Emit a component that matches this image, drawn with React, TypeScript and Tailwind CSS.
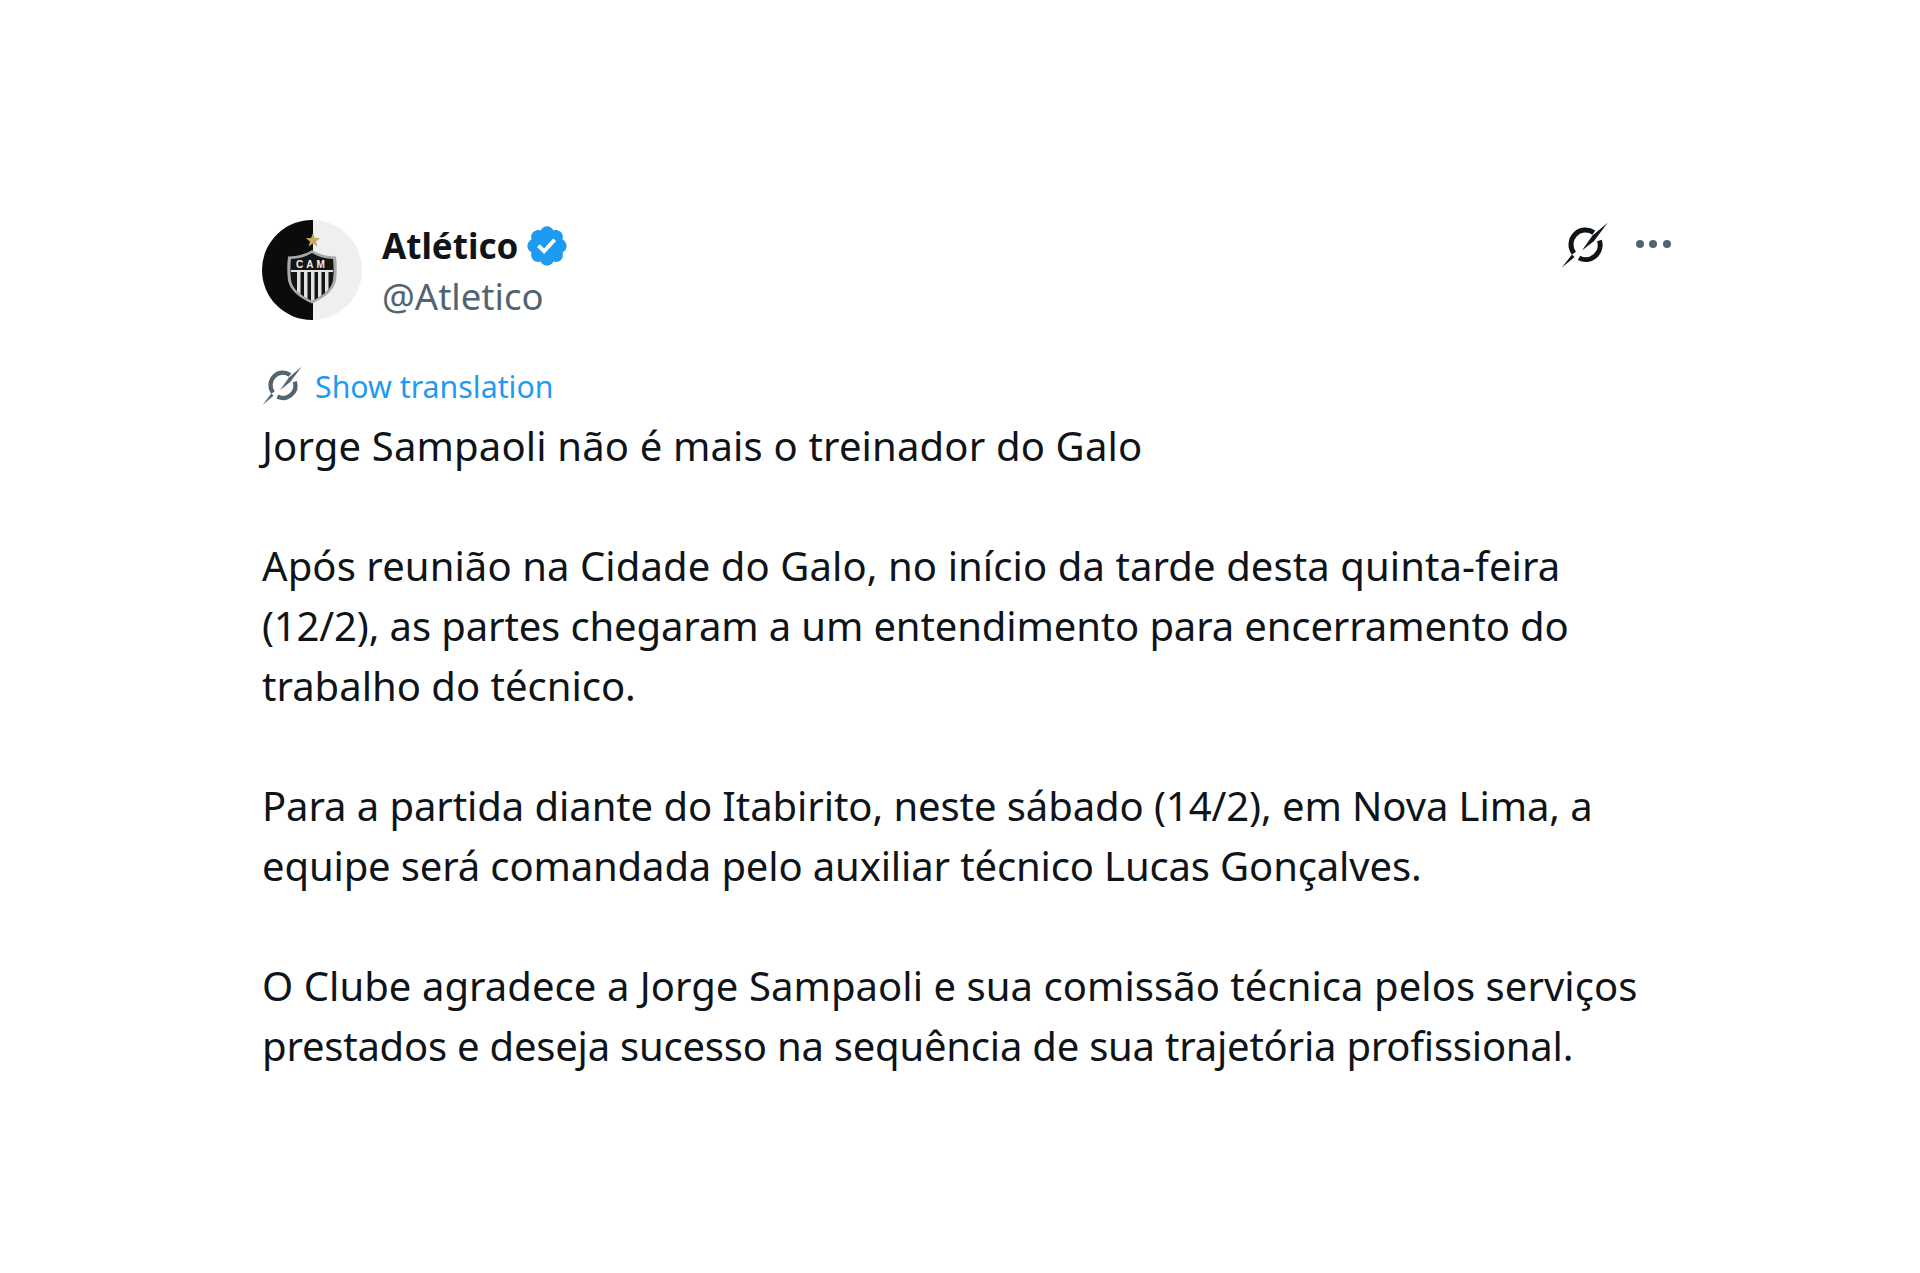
const Glyph = ({ className }: { className: string }) => (
  <svg viewBox="0 0 48 48" className={className}>
    <path d="M32.800 11.600A14.500 14.500 0 0 0 12.900 32.200" fill="none" stroke="currentColor" strokeWidth="5" />
    <path d="M18 36.900A14.500 14.500 0 0 0 38.400 19.500" fill="none" stroke="currentColor" strokeWidth="5" />
    <path d="M46.700 1.700 33 20 21 29.500 31.500 14.500z" fill="currentColor" />
    <path d="M.7 46.700 11 33.500l2.500 2.500z" fill="currentColor" />
  </svg>
);

const Crest = () => (
  <svg viewBox="0 0 100 100" className="w-[100px] h-[100px] rounded-full">
    <defs>
      <clipPath id="shield">
        <path d="M50 33c6 3.500 12 5.500 21 6 .8 7 .8 14 0 21-1.500 9-9 15-21 21-12-6-19.500-12-21-21-.8-7-.8-14 0-21 9-.5 15-2.500 21-6z" />
      </clipPath>
    </defs>
    <rect width="51" height="100" fill="#0b0b0b" />
    <rect x="51" width="49" height="100" fill="#efefef" />
    <path d="M51 13l1.900 5 5.300.2-4.200 3.300 1.500 5.100-4.500-3-4.500 3 1.500-5.100-4.200-3.300 5.300-.2z" fill="#c4aa5e" />
    <path d="M50 30c6 4 13 6 24 6.500 1 8 1 16 0 24-2 10-11 17-24 23-13-6-22-13-24-23-1-8-1-16 0-24 11-.5 18-2.500 24-6.500z" fill="#a9a9a9" />
    <path d="M50 33c6 3.500 12 5.500 21 6 .8 7 .8 14 0 21-1.500 9-9 15-21 21-12-6-19.500-12-21-21-.8-7-.8-14 0-21 9-.5 15-2.500 21-6z" fill="#141414" />
    <g clipPath="url(#shield)" fill="#e2e2e2">
      <rect x="29" y="50" width="42" height="2" />
      <rect x="35" y="52" width="3.500" height="30" />
      <rect x="42" y="52" width="3.500" height="30" />
      <rect x="49" y="52" width="3.500" height="30" />
      <rect x="56" y="52" width="3.500" height="30" />
      <rect x="63" y="52" width="3.500" height="30" />
    </g>
    <text x="50" y="48" textAnchor="middle" fontSize="10" fontWeight="700" letterSpacing="3" fill="#eeeeee" fontFamily="'Liberation Sans', sans-serif">CAM</text>
  </svg>
);

const Verified = () => (
  <svg viewBox="0 0 22 22" className="w-[46px] h-[46px]">
    <path fill="#1d9bf0" d="M20.396 11c-.018-.646-.215-1.275-.57-1.816-.354-.54-.852-.972-1.438-1.246.223-.607.27-1.264.14-1.897-.131-.634-.437-1.218-.882-1.687-.47-.445-1.053-.75-1.687-.882-.633-.13-1.29-.083-1.897.14-.273-.587-.704-1.086-1.245-1.44S11.647 1.62 11 1.604c-.646.017-1.273.213-1.813.568s-.969.854-1.24 1.44c-.608-.223-1.267-.272-1.902-.14-.635.13-1.22.436-1.69.882-.445.47-.749 1.055-.878 1.688-.13.633-.08 1.29.144 1.896-.587.274-1.087.705-1.443 1.245-.356.54-.555 1.17-.574 1.817.02.647.218 1.276.574 1.817.356.54.856.972 1.443 1.245-.224.606-.274 1.263-.144 1.896.13.634.433 1.218.877 1.688.47.443 1.054.747 1.687.878.633.132 1.29.084 1.897-.136.274.586.705 1.084 1.246 1.439.54.354 1.17.551 1.816.569.647-.016 1.276-.213 1.817-.567s.972-.854 1.245-1.44c.604.239 1.266.296 1.903.164.636-.132 1.22-.447 1.68-.907.46-.46.776-1.044.908-1.681s.075-1.299-.165-1.903c.586-.274 1.084-.705 1.439-1.246.354-.54.551-1.17.569-1.816z" />
    <path fill="#fff" d="M9.662 14.85l-3.429-3.428 1.293-1.302 2.072 2.072 4.4-4.794 1.347 1.246z" />
  </svg>
);

export default function App() {
  return (
    <div className="w-[1920px] h-[1273px] bg-white pt-[219px] px-[262px] font-['Noto_Sans','Open_Sans',sans-serif] text-[#0f1419]">
      <div className="flex items-start justify-between">
        <div className="flex items-center">
          <Crest />
          <div className="ml-[20px] flex flex-col pt-[2px]">
            <div className="flex items-center h-[50px]">
              <span className="text-[35px] leading-[50px] font-bold">Atlético</span>
              <span className="ml-[6px]"><Verified /></span>
            </div>
            <span className="text-[36.500px] leading-[50px] text-[#536471]">@Atletico</span>
          </div>
        </div>
        <div className="flex items-center mr-[-13px] mt-[2px]">
          <Glyph className="w-[48px] h-[48px] text-[#0f1419]" />
          <div className="ml-[27px] mb-[2px] flex gap-[5.700px]">
            <span className="w-[8px] h-[8px] rounded-full bg-[#536471]" />
            <span className="w-[8px] h-[8px] rounded-full bg-[#536471]" />
            <span className="w-[8px] h-[8px] rounded-full bg-[#536471]" />
          </div>
        </div>
      </div>

      <div className="mt-[43px] flex items-center h-[46px]">
        <Glyph className="w-[41px] h-[41px] mb-[4px] text-[#536471]" />
        <span className="ml-[12px] text-[30.300px] leading-[46px] text-[#1d9bf0]">Show translation</span>
      </div>

      <div className="mt-[6px] text-[40px] leading-[60px] whitespace-nowrap">
        <p className="tracking-[0.16px]">Jorge Sampaoli não é mais o treinador do Galo</p>
        <p className="mt-[60px]">
          <span className="block tracking-[0.09px]">Após reunião na Cidade do Galo, no início da tarde desta quinta-feira</span>
          <span className="block tracking-[-0.13px]">(12/2), as partes chegaram a um entendimento para encerramento do</span>
          <span className="block">trabalho do técnico.</span>
        </p>
        <p className="mt-[60px]">
          <span className="block tracking-[-0.085px]">Para a partida diante do Itabirito, neste sábado (14/2), em Nova Lima, a</span>
          <span className="block tracking-[-0.14px]">equipe será comandada pelo auxiliar técnico Lucas Gonçalves.</span>
        </p>
        <p className="mt-[60px]">
          <span className="block tracking-[0.05px]">O Clube agradece a Jorge Sampaoli e sua comissão técnica pelos serviços</span>
          <span className="block tracking-[-0.22px]">prestados e deseja sucesso na sequência de sua trajetória profissional.</span>
        </p>
      </div>
    </div>
  );
}
